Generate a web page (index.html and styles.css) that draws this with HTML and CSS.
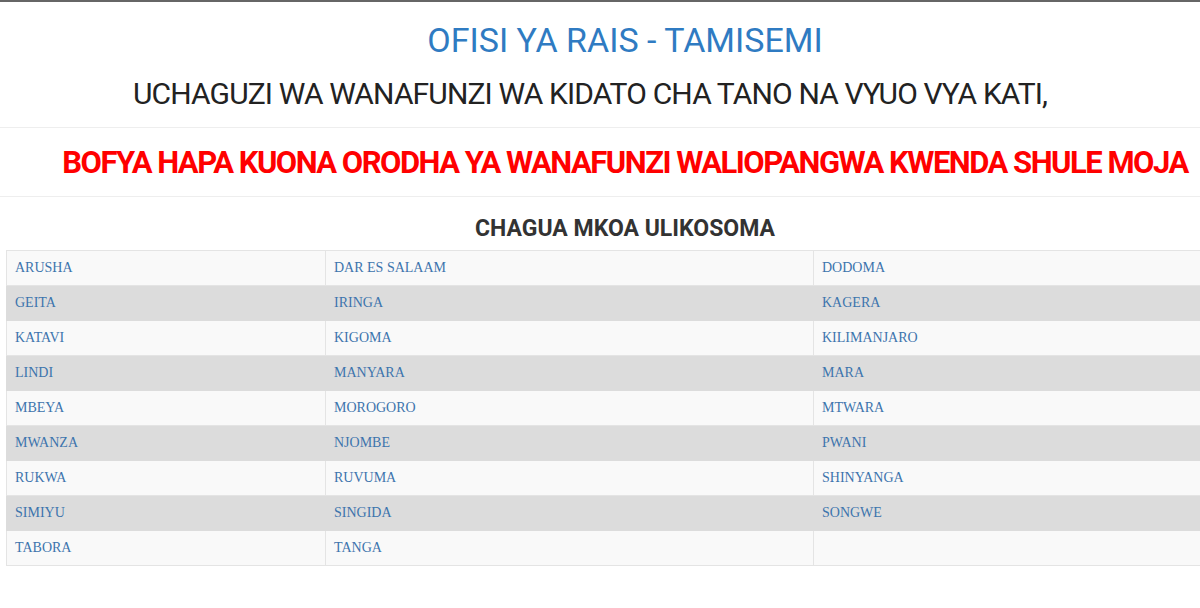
FILE: index.html
```html
<!DOCTYPE html>
<html>
<head>
<meta charset="utf-8">
<title>TAMISEMI</title>
<link rel="stylesheet" href="styles.css">
</head>
<body>
<div class="page">
  <header class="head">
    <h1 class="title">OFISI YA RAIS - TAMISEMI</h1>
    <h2 class="subtitle">UCHAGUZI WA WANAFUNZI WA KIDATO CHA TANO NA VYUO VYA KATI,</h2>
  </header>
  <hr class="rule">
  <a class="notice" href="#">BOFYA HAPA KUONA ORODHA YA WANAFUNZI WALIOPANGWA KWENDA SHULE MOJA</a>
  <hr class="rule">
  <h3 class="choose">CHAGUA MKOA ULIKOSOMA</h3>
  <table class="regions">
    <colgroup><col class="c1"><col class="c2"><col class="c3"></colgroup>
    <tr><td><a href="#">ARUSHA</a></td><td><a href="#">DAR ES SALAAM</a></td><td><a href="#">DODOMA</a></td></tr>
    <tr><td><a href="#">GEITA</a></td><td><a href="#">IRINGA</a></td><td><a href="#">KAGERA</a></td></tr>
    <tr><td><a href="#">KATAVI</a></td><td><a href="#">KIGOMA</a></td><td><a href="#">KILIMANJARO</a></td></tr>
    <tr><td><a href="#">LINDI</a></td><td><a href="#">MANYARA</a></td><td><a href="#">MARA</a></td></tr>
    <tr><td><a href="#">MBEYA</a></td><td><a href="#">MOROGORO</a></td><td><a href="#">MTWARA</a></td></tr>
    <tr><td><a href="#">MWANZA</a></td><td><a href="#">NJOMBE</a></td><td><a href="#">PWANI</a></td></tr>
    <tr><td><a href="#">RUKWA</a></td><td><a href="#">RUVUMA</a></td><td><a href="#">SHINYANGA</a></td></tr>
    <tr><td><a href="#">SIMIYU</a></td><td><a href="#">SINGIDA</a></td><td><a href="#">SONGWE</a></td></tr>
    <tr><td><a href="#">TABORA</a></td><td><a href="#">TANGA</a></td><td></td></tr>
  </table>
</div>
</body>
</html>
```

FILE: styles.css
```css
html, body {
  margin: 0;
  padding: 0;
  background: #ffffff;
  overflow: hidden;
}
body {
  border-top: 2px solid #666666;
  font-family: Roboto, "Liberation Sans", sans-serif;
  width: 1200px;
  height: 606px;
}
.page {
  width: 1250px;
}
.head {
  text-align: center;
}
.title {
  margin: 18px 0 0 0;
  font-size: 34px;
  line-height: 40px;
  font-weight: 400;
  color: #2f7bc2;
}
.subtitle {
  margin: 14px 0 0 0;
  padding-right: 70px;
  font-size: 30px;
  letter-spacing: -0.85px;
  line-height: 40px;
  font-weight: 400;
  color: #222222;
}
.rule {
  margin: 13px 0 0 0;
  border: 0;
  border-top: 1px solid #eeeeee;
  height: 0;
}
.notice {
  display: block;
  margin: 15px 0 13px 0;
  text-align: center;
  white-space: nowrap;
  font-size: 31px;
  letter-spacing: -1.5px;
  line-height: 40px;
  font-weight: 700;
  color: #ff0000;
  text-decoration: none;
}
.choose {
  margin: 17px 0 6px 0;
  text-align: center;
  font-size: 23px;
  line-height: 30px;
  font-weight: 700;
  color: #333333;
}
.regions {
  margin-left: 6px;
  width: 1238px;
  border-collapse: collapse;
  border: 1px solid #dddddd;
  font-family: "Liberation Serif", "Times New Roman", serif;
  font-size: 14px;
}
.c1 { width: 319px; }
.c2 { width: 488px; }
.regions td {
  padding: 8px 8px;
  line-height: 18px;
  border: 1px solid #e4e4e4;
  text-align: left;
  vertical-align: top;
}
.regions tr:nth-child(odd) td {
  background: #f9f9f9;
}
.regions tr:nth-child(even) td {
  background: #dcdcdc;
  border-color: #dcdcdc;
}
.regions a {
  color: #3d74ad;
  text-decoration: none;
}
```
